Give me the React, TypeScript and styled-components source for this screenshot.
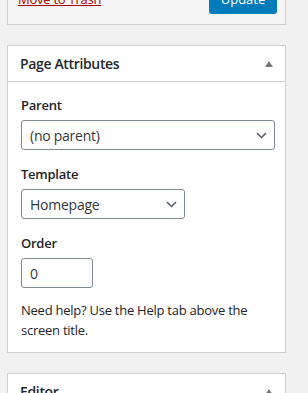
import styled, { createGlobalStyle } from "styled-components";

const GlobalStyle = createGlobalStyle`
  html, body {
    margin: 0;
    padding: 0;
    background: #f1f1f1;
    overflow: hidden;
  }
  body {
    font-family: "Open Sans", "Noto Sans", "Liberation Sans", sans-serif;
    font-size: 13px;
    letter-spacing: -0.25px;
    color: #1d2327;
  }
`;

const Sidebar = styled.div`
  width: 279px;
  margin-left: 7px;
  display: flex;
  flex-direction: column;
  gap: 20px;
`;

const PublishFooter = styled.div`
  margin-top: -27px;
  background: #f5f5f5;
  border: 1px solid #ccd0d4;
  padding: 10px 8px 10px 10px;
  display: flex;
  align-items: center;
  justify-content: space-between;
`;

const TrashLink = styled.a`
  color: #a00;
  text-decoration: underline;
  line-height: 30px;
  font-size: 13px;
`;

const PrimaryButton = styled.button`
  height: 30px;
  width: 68px;
  border: none;
  border-radius: 3px;
  background: #007cba;
  color: #fff;
  font-family: inherit;
  font-size: 13px;
`;

const Postbox = styled.section`
  background: #fff;
  border: 1px solid #ccd0d4;
`;

const Header = styled.div`
  height: 35px;
  padding: 0 12px;
  display: flex;
  align-items: center;
  justify-content: space-between;
  border-bottom: 1px solid #ccd0d4;
`;

const Title = styled.h2`
  margin: 0;
  font-size: 14px;
  font-weight: 600;
  letter-spacing: -0.35px;
  color: #23282d;
`;

const Inside = styled.div`
  padding: 14px 10px 12px 13px;
  display: flex;
  flex-direction: column;
`;

const Label = styled.label`
  display: block;
  font-weight: 600;
  line-height: 18px;
  margin: 15px 0 6px;
  &:first-child {
    margin-top: 0;
  }
`;

const SelectBox = styled.div<{ $width?: number }>`
  box-sizing: border-box;
  height: 30px;
  width: ${(p) => (p.$width ? `${p.$width}px` : "100%")};
  border: 1px solid #7e8993;
  border-radius: 3px;
  padding: 0 7px 0 8px;
  display: flex;
  align-items: center;
  justify-content: space-between;
  font-size: 14px;
  color: #32373c;
`;

const NumberInput = styled.input`
  box-sizing: border-box;
  height: 30px;
  width: 72px;
  border: 1px solid #7e8993;
  border-radius: 3px;
  padding: 0 8px;
  font-family: inherit;
  font-size: 14px;
  color: #32373c;
`;

const Help = styled.p`
  margin: 13px 0 0;
  line-height: 19.5px;
`;

const Chevron = () => (
  <svg width="11" height="7" viewBox="0 0 11 7">
    <path d="M1 1l4.5 4.5L10 1" fill="none" stroke="#555d66" strokeWidth="1.5" />
  </svg>
);

const ToggleArrow = () => (
  <svg width="8" height="6" viewBox="0 0 8 6">
    <path d="M4 0L8 6H0z" fill="#72777c" />
  </svg>
);

export default function App() {
  return (
    <>
      <GlobalStyle />
      <Sidebar>
        <PublishFooter>
          <TrashLink href="#">Move to Trash</TrashLink>
          <PrimaryButton>Update</PrimaryButton>
        </PublishFooter>

        <Postbox>
          <Header>
            <Title>Page Attributes</Title>
            <ToggleArrow />
          </Header>
          <Inside>
            <Label>Parent</Label>
            <SelectBox>
              <span>(no parent)</span>
              <Chevron />
            </SelectBox>
            <Label>Template</Label>
            <SelectBox $width={164}>
              <span>Homepage</span>
              <Chevron />
            </SelectBox>
            <Label>Order</Label>
            <NumberInput defaultValue="0" />
            <Help>Need help? Use the Help tab above the screen title.</Help>
          </Inside>
        </Postbox>

        <Postbox>
          <Header>
            <Title>Editor</Title>
            <ToggleArrow />
          </Header>
        </Postbox>
      </Sidebar>
    </>
  );
}
